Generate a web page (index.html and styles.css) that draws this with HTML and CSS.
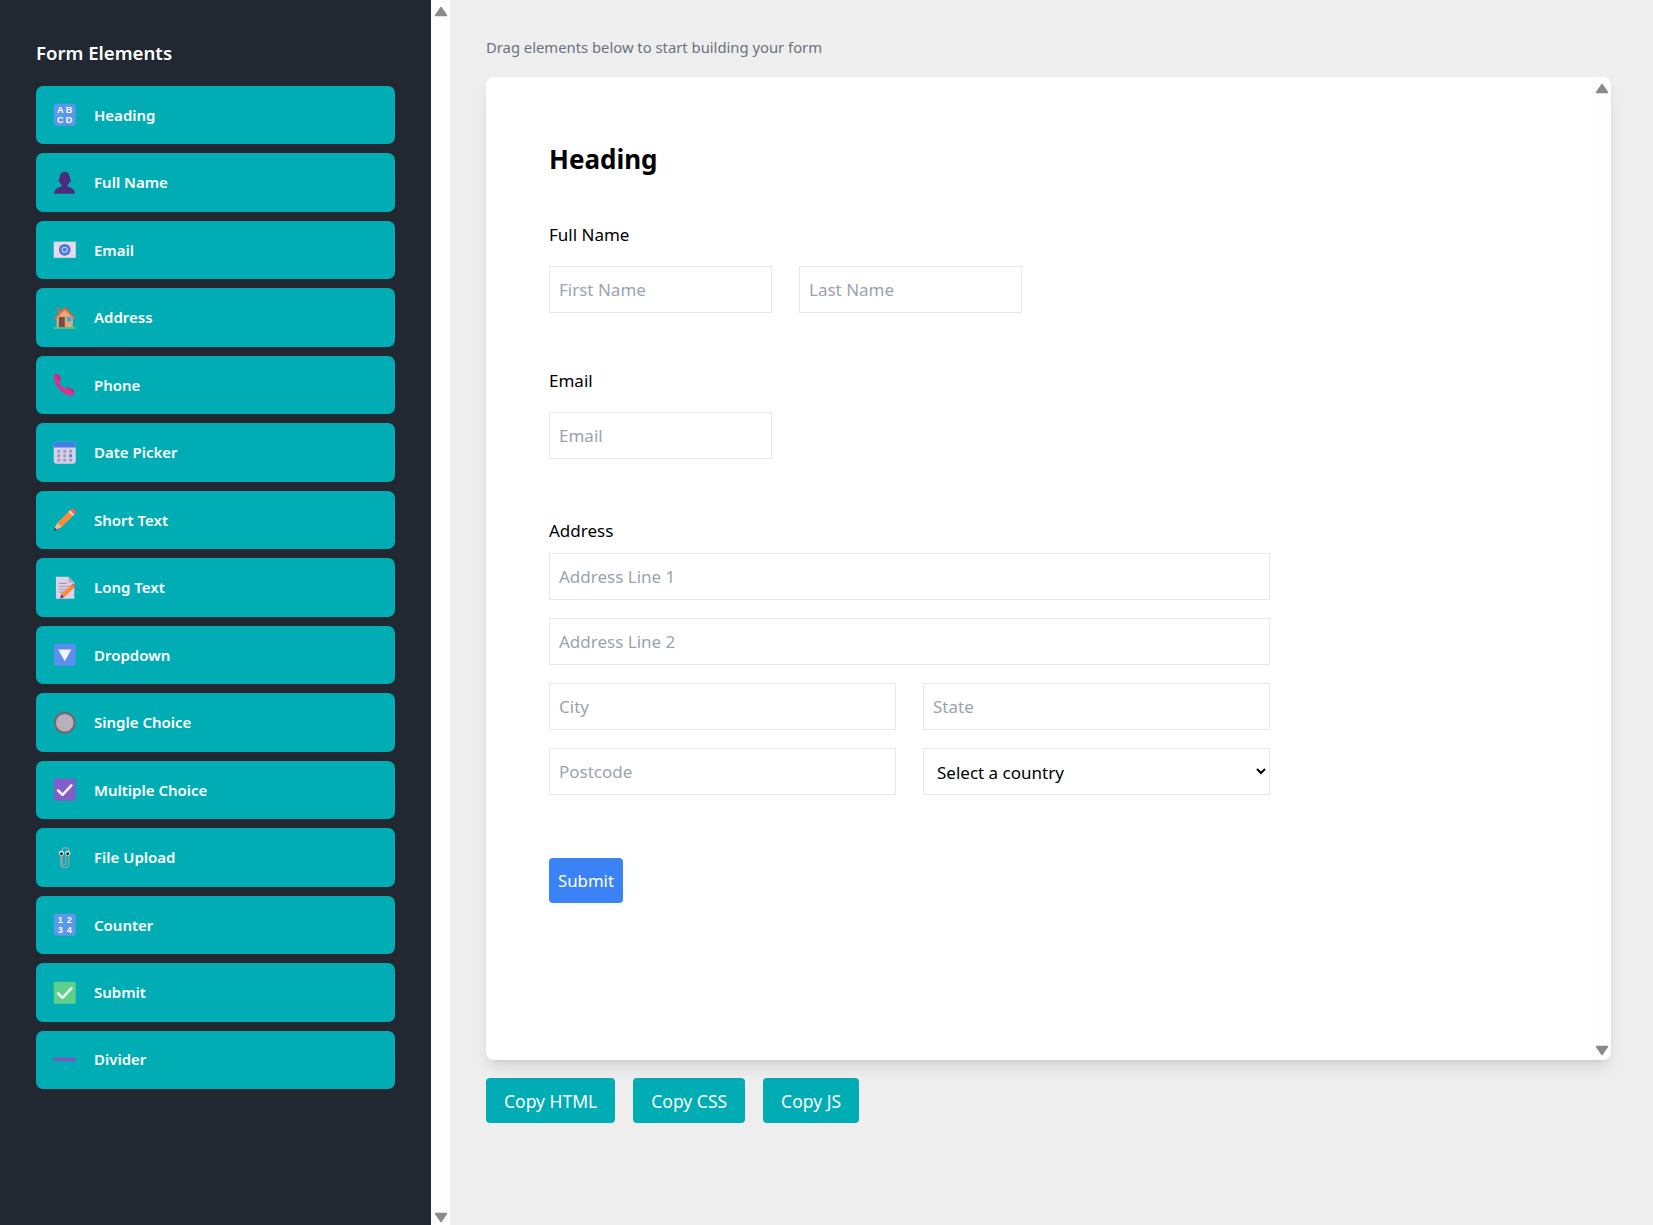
FILE: index.html
```html
<!DOCTYPE html>
<html lang="en">
<head>
    <meta charset="UTF-8">
    <meta name="viewport" content="width=device-width, initial-scale=1.0">
    <title>Form Builder</title>
    <link rel="stylesheet" href="styles.css">
</head>
<body>
    <aside class="sidebar">
        <h2 class="sidebar-title">Form Elements</h2>
        <div class="element-list">
            <div class="element">
                <svg class="element-icon" viewBox="0 0 32 32"><rect x="1" y="1" width="30" height="30" rx="4" fill="#5b97ee"/><text class="icon-text" x="10" y="13">A</text><text class="icon-text" x="22" y="13">B</text><text class="icon-text" x="10" y="27.3">C</text><text class="icon-text" x="22" y="27.3">D</text></svg>
                <span class="element-name">Heading</span>
            </div>
            <div class="element">
                <svg class="element-icon" viewBox="0 0 32 32"><path d="M9 9a7 8 0 0 1 14 0v2c1 0 1.500 1 1.500 2s-.5 2-1.700 2c-.6 2-2 3.500-3.300 4.300V21c4 .8 10.500 3 10.500 10H1.500c0-7 6.500-9.200 10.500-10v-1.700C10.700 18.500 9.800 17 9.200 15 8 15 7.500 14 7.500 13s.5-2 1.500-2z" fill="#4b2a80"/></svg>
                <span class="element-name">Full Name</span>
            </div>
            <div class="element">
                <svg class="element-icon" viewBox="0 0 32 32"><rect x="1" y="5" width="30" height="22" fill="#e9dcef"/><path d="M1 5l15 11L31 5M1 27l15-11 15 11" fill="none" stroke="#d3c4e4" stroke-width="1"/><circle cx="16" cy="16" r="8" fill="#4a78d8"/><circle cx="16" cy="16" r="3.500" fill="none" stroke="#c9d8f6" stroke-width="1.400"/></svg>
                <span class="element-name">Email</span>
            </div>
            <div class="element">
                <svg class="element-icon" viewBox="0 0 32 32"><rect x="6" y="2" width="3" height="8" fill="#c9714a"/><path d="M5 14L16 4l11 10v15H5z" fill="#e2a877"/><path d="M1 17L16 1l15 16-2 1L16 5 3 18z" fill="#f0613a"/><rect x="8" y="15" width="8" height="14" fill="#7a4a48"/><rect x="19" y="15" width="6" height="6" fill="#3ba8ee"/><rect x="1" y="29" width="30" height="2" fill="#5fce7c"/></svg>
                <span class="element-name">Address</span>
            </div>
            <div class="element">
                <svg class="element-icon" viewBox="0 0 32 32"><path d="M3 1l5 1 3 8-3 2c1 4 5 8 9 10l3-3 8 4 1 5-3 2.500C12 30 1 16 1 3z" fill="#e52c8c"/><path d="M3 1l5 1 3 8-2 1-6-9zM20 19l8 4 1 5-9-8z" fill="#b8307e"/></svg>
                <span class="element-name">Phone</span>
            </div>
            <div class="element">
                <svg class="element-icon" viewBox="0 0 32 32"><rect x="1" y="1" width="30" height="30" rx="4" fill="#d9d0e8"/><path d="M1 9V5a4 4 0 0 1 4-4h22a4 4 0 0 1 4 4v4z" fill="#3f7fe8"/><g fill="#a39ab4"><rect x="6" y="12" width="4" height="4"/><rect x="14" y="12" width="4" height="4"/><rect x="22" y="12" width="4" height="4"/><rect x="6" y="18" width="4" height="4"/><rect x="14" y="18" width="4" height="4"/><rect x="6" y="24" width="4" height="4"/><rect x="14" y="24" width="4" height="4"/><rect x="22" y="24" width="4" height="4"/></g><rect x="22" y="18" width="4" height="4" fill="#3b8cf0"/></svg>
                <span class="element-name">Date Picker</span>
            </div>
            <div class="element">
                <svg class="element-icon" viewBox="0 0 32 32"><path d="M6 20L22 4l6 6-16 16z" fill="#fb8c3c"/><path d="M22 4l3-3c1-.6 2-.6 3 0l3 3c.6 1 .6 2 0 3l-3 3z" fill="#f4604a"/><path d="M21 5l2-2 6 6-2 2z" fill="#e9d6e0"/><path d="M6 20l6 6-9 4a1 1 0 0 1-1.500-1.500z" fill="#f7c08a"/><path d="M2.500 26.500l3 3-3.500 1.500a.8.8 0 0 1-1-1z" fill="#6a2a5a"/></svg>
                <span class="element-name">Short Text</span>
            </div>
            <div class="element">
                <svg class="element-icon" viewBox="0 0 32 32"><path d="M4 1h17l8 8v22H4z" fill="#dcd2e4"/><path d="M21 1l8 8h-8z" fill="#b7aac6"/><path d="M8 10h11M8 14h16M8 18h14M8 22h9" stroke="#a498b2" stroke-width="1.500"/><path d="M11 25L25 12l4 4-14 13z" fill="#f98a3c"/><path d="M25 12l2-2 4 4-2 2z" fill="#f4604a"/><path d="M11 25l4 4-5 1.500z" fill="#6a2a5a"/></svg>
                <span class="element-name">Long Text</span>
            </div>
            <div class="element">
                <svg class="element-icon" viewBox="0 0 32 32"><rect x="1" y="1" width="30" height="30" rx="3" fill="#5a8ff0"/><path d="M7 9h18L16 25z" fill="#f4f3fb"/></svg>
                <span class="element-name">Dropdown</span>
            </div>
            <div class="element">
                <svg class="element-icon" viewBox="0 0 32 32"><circle cx="16" cy="16" r="15" fill="#6e6a74"/><circle cx="16" cy="16" r="12" fill="#b8b0bc"/></svg>
                <span class="element-name">Single Choice</span>
            </div>
            <div class="element">
                <svg class="element-icon" viewBox="0 0 32 32"><rect x="1" y="1" width="30" height="30" rx="2" fill="#835dc9"/><path d="M7 17l6 6L25 10" fill="none" stroke="#f6f2fb" stroke-width="3.500" stroke-linecap="round" stroke-linejoin="round"/></svg>
                <span class="element-name">Multiple Choice</span>
            </div>
            <div class="element">
                <svg class="element-icon" viewBox="0 0 32 32"><path d="M10.500 12v13c0 6 11 6 11 0V6c0-5-9-5-9 0v17c0 3 5 3 5 0V12" fill="none" stroke="#93a3a8" stroke-width="1.800"/><circle cx="11.500" cy="10" r="3.400" fill="#f2f2f2"/><circle cx="20" cy="10" r="3.400" fill="#f2f2f2"/><circle cx="11.500" cy="10.500" r="2" fill="#222"/><circle cx="20" cy="10.500" r="2" fill="#222"/></svg>
                <span class="element-name">File Upload</span>
            </div>
            <div class="element">
                <svg class="element-icon" viewBox="0 0 32 32"><rect x="1" y="1" width="30" height="30" rx="4" fill="#5b97ee"/><text class="icon-text" x="10" y="13">1</text><text class="icon-text" x="22" y="13">2</text><text class="icon-text" x="10" y="27.3">3</text><text class="icon-text" x="22" y="27.3">4</text></svg>
                <span class="element-name">Counter</span>
            </div>
            <div class="element">
                <svg class="element-icon" viewBox="0 0 32 32"><rect x="1" y="1" width="30" height="30" rx="2" fill="#5dd08c"/><path d="M7 17l6 6L25 10" fill="none" stroke="#f2fbf5" stroke-width="3.500" stroke-linecap="round" stroke-linejoin="round"/></svg>
                <span class="element-name">Submit</span>
            </div>
            <div class="element">
                <svg class="element-icon" viewBox="0 0 32 32"><rect x="1" y="13" width="30" height="5" rx="1" fill="#7a58c0"/></svg>
                <span class="element-name">Divider</span>
            </div>
        </div>
    </aside>

    <div class="scrollbar">
        <svg class="scroll-arrow" viewBox="0 0 14 11"><path d="M7 1.500L12.500 9.500H1.500z"/></svg>
        <svg class="scroll-arrow" viewBox="0 0 14 11"><path d="M1.500 1.500H12.500L7 9.500z"/></svg>
    </div>

    <main class="builder">
        <p class="hint">Drag elements below to start building your form</p>

        <div class="canvas">
            <form class="form">
                <h1 class="form-heading">Heading</h1>

                <div class="field field-name">
                    <label class="field-label">Full Name</label>
                    <div class="half-row">
                        <input class="text-input" type="text" placeholder="First Name">
                        <input class="text-input" type="text" placeholder="Last Name">
                    </div>
                </div>

                <div class="field field-email">
                    <label class="field-label">Email</label>
                    <input class="text-input short" type="text" placeholder="Email">
                </div>

                <div class="field field-address">
                    <label class="field-label">Address</label>
                    <div class="address-grid">
                        <input class="text-input wide" type="text" placeholder="Address Line 1">
                        <input class="text-input wide" type="text" placeholder="Address Line 2">
                        <input class="text-input" type="text" placeholder="City">
                        <input class="text-input" type="text" placeholder="State">
                        <input class="text-input" type="text" placeholder="Postcode">
                        <select class="text-input country">
                            <option>Select a country</option>
                        </select>
                    </div>
                </div>

                <button class="submit-btn" type="button">Submit</button>
            </form>

            <div class="scrollbar card-scrollbar">
                <svg class="scroll-arrow" viewBox="0 0 14 11"><path d="M7 1.500L12.500 9.500H1.500z"/></svg>
                <svg class="scroll-arrow" viewBox="0 0 14 11"><path d="M1.500 1.500H12.500L7 9.500z"/></svg>
            </div>
        </div>

        <div class="copy-row">
            <button class="copy-btn" type="button">Copy HTML</button>
            <button class="copy-btn" type="button">Copy CSS</button>
            <button class="copy-btn" type="button">Copy JS</button>
        </div>
    </main>
</body>
</html>
```

FILE: styles.css
```css
* {
    box-sizing: border-box;
}
html, body {
    height: 100%;
}
body {
    margin: 0;
    display: flex;
    overflow: hidden;
    background-color: #eeeeee;
    color: #000;
    font-family: "Noto Sans", "Open Sans", sans-serif;
}

/* sidebar */
.sidebar {
    width: 431px;
    flex: none;
    padding: 36px;
    background-color: #222831;
    color: #fff;
}
.sidebar-title {
    margin: 0 0 16px;
    font-size: 18.6px;
    line-height: 34px;
    font-weight: 600;
}
.element-list {
    display: flex;
    flex-direction: column;
    gap: 9.1px;
}
.element {
    display: flex;
    align-items: center;
    gap: 17.5px;
    height: 58.4px;
    padding-left: 17px;
    background-color: #00adb5;
    border-radius: 7px;
    font-size: 15px;
    font-weight: 600;
}
.element-name {
    padding-bottom: 1px;
}
.element-icon {
    width: 23.5px;
    height: 23.5px;
    flex: none;
}
.icon-text {
    fill: #fff;
    font-family: "Liberation Sans", sans-serif;
    font-size: 12.4px;
    font-weight: 700;
    text-anchor: middle;
}

/* scrollbars */
.scrollbar {
    width: 19px;
    flex: none;
    display: flex;
    flex-direction: column;
    justify-content: space-between;
    align-items: center;
    padding: 6px 0 2px;
    background-color: #fdfdfd;
}
.scroll-arrow {
    width: 14px;
    height: 11px;
    fill: #8a8a8a;
    stroke: #8a8a8a;
    stroke-width: 1.5;
    stroke-linejoin: round;
}

/* main area */
.builder {
    flex: 1;
    padding: 36px 42px 36px 36px;
}
.hint {
    margin: 0 0 18px;
    font-size: 14.8px;
    line-height: 23px;
    color: #6b7280;
}
.canvas {
    display: flex;
    height: 983px;
    background-color: #fff;
    border-radius: 8px;
    box-shadow: 0 10px 15px -3px rgba(0, 0, 0, 0.1), 0 4px 6px -4px rgba(0, 0, 0, 0.1);
}
.form {
    flex: 1;
    padding: 61px 63px;
}
.form-heading {
    margin: 0 0 42px;
    font-size: 26px;
    line-height: 42px;
    font-weight: 700;
}
.card-scrollbar {
    border-radius: 0 8px 8px 0;
    padding: 6px 0 4px;
}
.field-label {
    display: block;
    font-size: 17px;
    line-height: 27px;
}
.field-name .field-label {
    line-height: 25px;
    margin-bottom: 19px;
}
.field-email .field-label {
    margin-bottom: 18px;
}
.field-address .field-label {
    margin-bottom: 9px;
}
.field-name {
    margin-bottom: 54px;
}
.field-email {
    margin-bottom: 58px;
}
.half-row {
    display: flex;
    gap: 27px;
}
.text-input {
    height: 47px;
    padding: 0 9px;
    background-color: #fff;
    border: 1px solid #e5e7eb;
    border-radius: 0;
    font-family: inherit;
    font-size: 17px;
    color: #000;
}
.text-input::placeholder {
    color: #9ca3af;
}
.half-row .text-input, .text-input.short {
    display: block;
    width: 223px;
}
.address-grid {
    display: grid;
    grid-template-columns: 347px 347px;
    gap: 18px 27px;
}
.text-input.wide {
    grid-column: span 2;
}
.country {
    padding-top: 2px;
}
.submit-btn {
    margin-top: 63px;
    height: 45px;
    padding: 0 9px;
    background-color: #3b82f6;
    color: #fff;
    border: none;
    border-radius: 4px;
    font-family: inherit;
    font-size: 16.8px;
}
.copy-row {
    display: flex;
    gap: 18px;
    margin-top: 18px;
}
.copy-btn {
    height: 45px;
    padding: 0 18px;
    background-color: #00adb5;
    color: #fff;
    border: none;
    border-radius: 4px;
    font-family: inherit;
    font-size: 17.5px;
}
```
